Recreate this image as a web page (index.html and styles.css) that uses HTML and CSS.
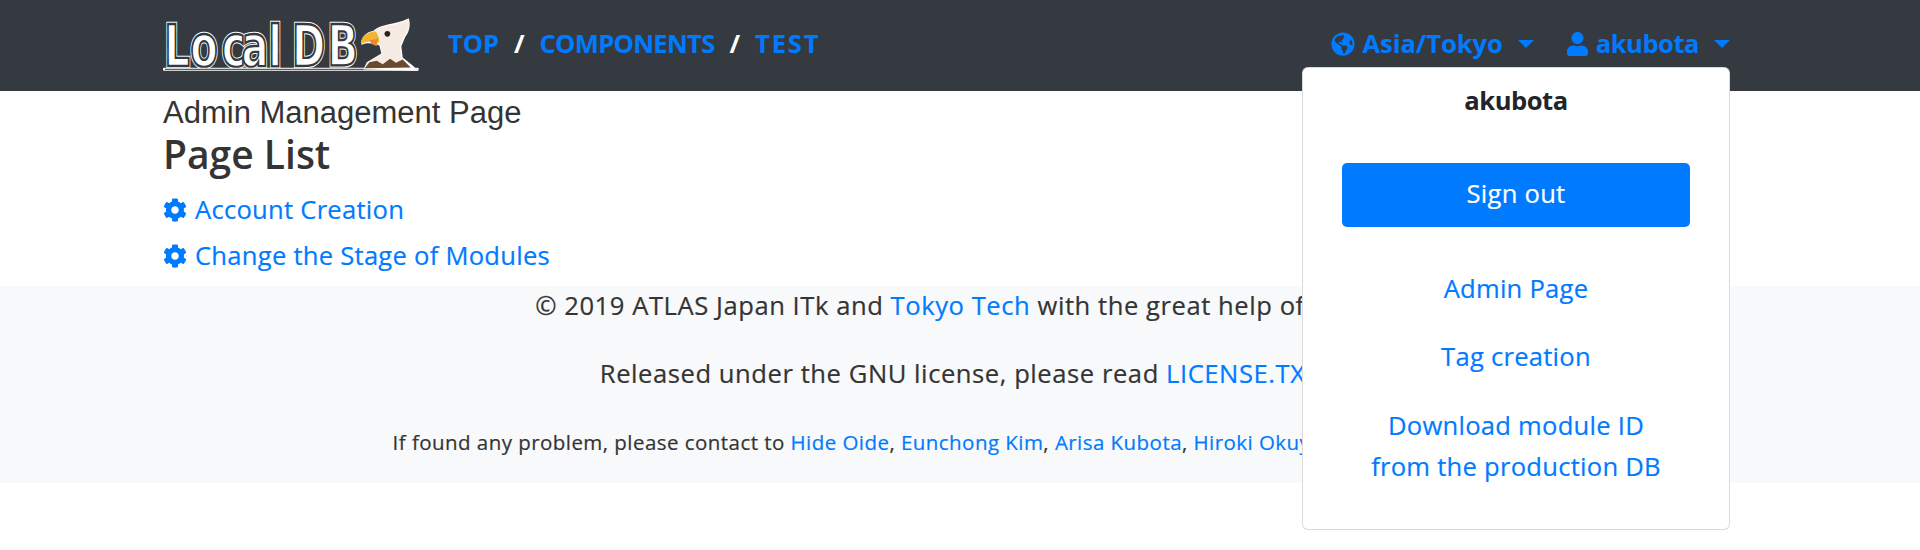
FILE: index.html
```html
<!DOCTYPE html>
<html lang="en">
<head>
<meta charset="utf-8">
<title>Admin Management Page</title>
<link rel="stylesheet" href="styles.css">
</head>
<body>
<svg class="defs" width="0" height="0" aria-hidden="true">
  <symbol id="i-cog" viewBox="0 0 512 512"><path d="M487.4 315.7l-42.6-24.6c4.3-23.2 4.3-47 0-70.2l42.6-24.6c4.9-2.8 7.1-8.6 5.5-14-11.1-35.6-30-67.8-54.7-94.6-3.8-4.1-10-5.1-14.8-2.3L380.8 110c-17.9-15.4-38.5-27.3-60.8-35.1V25.8c0-5.6-3.9-10.5-9.4-11.7-36.7-8.2-74.3-7.8-109.2 0-5.5 1.2-9.4 6.1-9.4 11.7V75c-22.2 7.9-42.8 19.8-60.8 35.1L88.7 85.5c-4.9-2.8-11-1.9-14.8 2.3-24.7 26.7-43.6 58.9-54.7 94.6-1.7 5.4.6 11.2 5.5 14L67.3 221c-4.3 23.2-4.3 47 0 70.2l-42.6 24.6c-4.9 2.8-7.1 8.6-5.5 14 11.1 35.6 30 67.8 54.7 94.6 3.8 4.1 10 5.1 14.8 2.3l42.6-24.6c17.9 15.4 38.5 27.3 60.8 35.1v49.2c0 5.6 3.9 10.5 9.4 11.7 36.7 8.2 74.3 7.8 109.2 0 5.5-1.2 9.4-6.1 9.4-11.7v-49.2c22.2-7.9 42.8-19.8 60.8-35.1l42.6 24.6c4.9 2.8 11 1.9 14.8-2.3 24.7-26.7 43.6-58.9 54.7-94.6 1.5-5.5-.7-11.3-5.6-14.1zM256 336c-44.1 0-80-35.9-80-80s35.9-80 80-80 80 35.9 80 80-35.9 80-80 80z"/></symbol>
</svg>

<nav class="navbar">
  <a class="brand" href="#" aria-label="LocalDB">
    <svg class="logo" viewBox="40 40 775 170" width="258" height="57">
      <g class="logo-word" transform="scale(.7 1)">
        <text class="w-outer" x="63 174 309 394 509 611 763" y="190">LocalDB</text>
        <text class="w-mid" x="63 174 309 394 509 611 763" y="190">LocalDB</text>
        <text class="w-inner" x="63 174 309 394 509 611 763" y="190">LocalDB</text>
      </g>
      <rect x="40" y="195" width="768" height="9" rx="3" fill="#fff"/>
      <rect x="46" y="198" width="756" height="3" fill="#343a40"/>
      <path class="eagle-edge" d="M778 46C784 62 782 84 768 102L756 130L760 164L790 188L806 204L642 200L652 178L696 152L690 128C672 120 650 118 636 126C632 106 650 88 672 84C692 62 740 66 778 46Z"/>
      <path class="eagle-head" d="M778 50C782 66 778 84 764 102L752 128L756 164L784 192L650 192L660 176L700 152L692 128L688 92L674 86C694 66 742 70 778 50Z"/>
      <path class="eagle-body" d="M646 196L660 178L682 174L700 184L722 168L740 180L760 170L784 194Z"/>
      <path class="eagle-beak" d="M636 124C632 104 652 88 676 85C686 90 690 104 690 120C672 114 650 114 636 124Z"/>
      <path class="eagle-lip" d="M660 112L686 108L682 130L668 124Z"/>
      <circle cx="714" cy="93" r="8.5" fill="#232323"/>
    </svg>
  </a>
  <div class="nav-left">
    <a href="#">TOP</a><span class="sep">/</span><a class="nav-long" href="#">COMPONENTS</a><span class="sep">/</span><a class="nav-short" href="#">TEST</a>
  </div>
  <div class="nav-right">
    <a class="toggle" href="#">
      <svg class="icon" viewBox="0 0 496 512"><path d="M248 8C111.03 8 0 119.03 0 256s111.03 248 248 248 248-111.03 248-248S384.97 8 248 8zm82.29 357.6c-3.9 3.88-7.99 7.95-11.31 11.28-2.99 3-5.1 6.7-6.17 10.71-1.51 5.66-2.73 11.38-4.77 16.87l-17.39 46.85c-13.76 3-28 4.69-42.65 4.69v-27.38c1.69-12.62-7.64-36.26-22.63-51.25-6-6-9.37-14.14-9.37-22.63v-32.01c0-11.64-6.27-22.34-16.46-27.97-14.37-7.95-34.81-19.06-48.81-26.11-11.48-5.78-22.1-13.14-31.65-21.75l-.8-.72a114.792 114.792 0 0 1-18.06-20.74c-9.38-13.77-24.66-36.42-34.59-51.14 20.47-45.5 57.36-82.04 103.2-101.89l24.01 12.01C203.48 89.74 216 82.01 216 70.11v-11.3c7.99-1.29 16.12-2.11 24.42-2.42l28.3 28.3c6.25 6.25 6.25 16.38 0 22.63L264 112l-10.34 10.34c-3.12 3.12-3.12 8.19 0 11.31l4.69 4.69c3.12 3.12 3.12 8.19 0 11.31l-8 8a8.008 8.008 0 0 1-5.66 2.34h-8.99c-2.08 0-4.08.81-5.58 2.27l-9.92 9.65a8.008 8.008 0 0 0-1.58 9.31l15.59 31.19c2.66 5.32-1.21 11.58-7.15 11.58h-5.64c-1.93 0-3.79-.7-5.24-1.96l-9.28-8.06a16.017 16.017 0 0 0-15.55-3.1l-31.17 10.39a11.95 11.95 0 0 0-8.17 11.34c0 4.53 2.56 8.66 6.61 10.69l11.08 5.54c9.41 4.71 19.79 7.16 30.31 7.16s22.59 27.29 32 32h66.75c8.49 0 16.62 3.37 22.63 9.37l13.69 13.69a30.503 30.503 0 0 1 8.93 21.57 46.536 46.536 0 0 1-13.72 32.98zM417 274.25c-5.79-1.45-10.84-5-14.15-9.97l-17.98-26.97a23.97 23.97 0 0 1 0-26.62l19.59-29.38c2.32-3.47 5.5-6.29 9.24-8.15l12.98-6.49C440.2 193.59 448 223.87 448 256c0 8.67-.74 17.16-1.82 25.54L417 274.25z"/></svg>
      <span>Asia/Tokyo</span><i class="caret"></i>
    </a>
    <a class="toggle" href="#">
      <svg class="icon icon-user" viewBox="0 0 448 512"><path d="M224 256c70.7 0 128-57.3 128-128S294.7 0 224 0 96 57.3 96 128s57.3 128 128 128zm89.6 32h-16.7c-22.2 10.2-46.9 16-72.9 16s-50.6-5.8-72.9-16h-16.7C60.2 288 0 348.2 0 422.4V464c0 26.5 21.5 48 48 48h352c26.5 0 48-21.5 48-48v-41.6c0-74.2-60.2-134.4-134.4-134.4z"/></svg>
      <span class="user-name">akubota</span><i class="caret"></i>
    </a>
  </div>
</nav>

<main class="content">
  <p class="subtitle">Admin Management Page</p>
  <h1 class="title">Page List</h1>
  <ul class="page-list">
    <li><a href="#"><svg class="icon"><use href="#i-cog"/></svg>Account Creation</a></li>
    <li><a href="#"><svg class="icon"><use href="#i-cog"/></svg>Change the Stage of Modules</a></li>
  </ul>
</main>

<footer class="footer">
  <p class="line-credit">© 2019 ATLAS Japan ITk and <a href="#">Tokyo Tech</a> with the great help of</p>
  <p class="line-license">Released under the GNU license, please read <a href="#">LICENSE.TXT</a></p>
  <p class="small">If found any problem, please contact to <a href="#">Hide Oide</a>, <a href="#">Eunchong Kim</a>, <a href="#">Arisa Kubota</a>, <a href="#">Hiroki Okuyama</a></p>
</footer>

<div class="menu">
  <div class="menu-name">akubota</div>
  <a class="btn" href="#">Sign out</a>
  <a class="item" href="#">Admin Page</a>
  <a class="item" href="#">Tag creation</a>
  <a class="item" href="#">Download module ID<br>from the production DB</a>
</div>
</body>
</html>
```
FILE: styles.css
```css
* { box-sizing: border-box; }
html, body { margin: 0; padding: 0; }
body {
  font-family: "Open Sans", "Noto Sans", sans-serif;
  font-size: 25.6px;
  letter-spacing: .25px;
  -webkit-text-stroke: .2px;
  line-height: 38.4px;
  color: #343434;
  background: #fff;
  position: relative;
  overflow: hidden;
  height: 550px;
}
a { color: #007bff; text-decoration: none; }
.defs { position: absolute; }

.navbar {
  height: 91px;
  background: #343a40;
  display: flex;
  align-items: center;
  padding: 0 190px 3px 163px;
  -webkit-text-stroke: 0;
}
.brand { display: flex; }
.logo { display: block; overflow: visible; }
.logo-word text {
  font-family: "DejaVu Sans", sans-serif;
  font-weight: 700;
  font-size: 172px;
  letter-spacing: 0;
}
.w-outer { fill: #fff; stroke: #fff; stroke-width: 13; }
.w-mid { fill: #fff; stroke: #343a40; stroke-width: 7; }
.w-inner { fill: none; stroke: #343a40; stroke-width: 3; stroke-dasharray: 26 34; }
.eagle-edge { fill: #fff; }
.eagle-head { fill: #f6ebe2; }
.eagle-body { fill: #6a4a2c; }
.eagle-beak { fill: #f4b431; }
.eagle-lip { fill: #e8892f; }

.nav-left {
  display: flex;
  align-items: center;
  margin-left: 27px;
  font-weight: 700;
  letter-spacing: -0.1px;
}
.nav-long { letter-spacing: -.7px; }
.nav-short { letter-spacing: 1.8px; }
.sep { color: #fff; margin: 0 15px; }
.nav-right {
  margin-left: auto;
  display: flex;
  align-items: center;
  font-weight: 700;
  gap: 33px;
  letter-spacing: -0.1px;
}
.user-name { letter-spacing: -.5px; }
.toggle { display: flex; align-items: center; }
.icon { width: 24px; height: 24px; fill: currentColor; margin-right: 8px; flex: none; }
.icon-user { width: 21px; }
.caret {
  margin-left: 15px;
  border-top: 8px solid #007bff;
  border-left: 8px solid transparent;
  border-right: 8px solid transparent;
}

.content { padding: 0 163px; height: 195px; }
.subtitle {
  margin: 0;
  padding-top: 4px;
  font-family: "Liberation Sans", sans-serif;
  font-size: 31px;
  letter-spacing: 0;
  -webkit-text-stroke: 0;
  line-height: 36px;
}
.title {
  margin: 0;
  font-size: 39px;
  font-weight: 600;
  letter-spacing: 0;
  -webkit-text-stroke: 0;
  line-height: 45px;
}
.page-list { list-style: none; margin: 14.5px 0 0; padding: 0; }
.page-list li { margin-bottom: 7.6px; }
.page-list a { display: flex; align-items: center; }

.footer {
  background: #f8f9fa;
  height: 197px;
  text-align: center;
  padding-top: 1px;
}
.footer p { margin: 0 0 29.5px; letter-spacing: .55px; }
.footer .line-credit { padding-right: 80px; }
.footer .small { font-size: 20.5px; letter-spacing: .45px; padding-right: 174px; }

.menu {
  position: absolute;
  top: 67px;
  left: 1302px;
  width: 428px;
  height: 463px;
  background: #fff;
  border: 1px solid rgba(0, 0, 0, .15);
  border-radius: 6px;
  padding: 14px 39px 0;
  display: flex;
  flex-direction: column;
  align-items: center;
  text-align: center;
}
.menu-name { font-weight: 700; color: #212529; letter-spacing: -.5px; -webkit-text-stroke: 0; }
.btn {
  align-self: stretch;
  margin-top: 43px;
  height: 64px;
  line-height: 62px;
  background: #007bff;
  color: #fff;
  border-radius: 5px;
}
.item { margin-top: 27px; line-height: 41px; }
.item:last-child { margin-top: 28px; }
.btn + .item { margin-top: 41px; }
```
